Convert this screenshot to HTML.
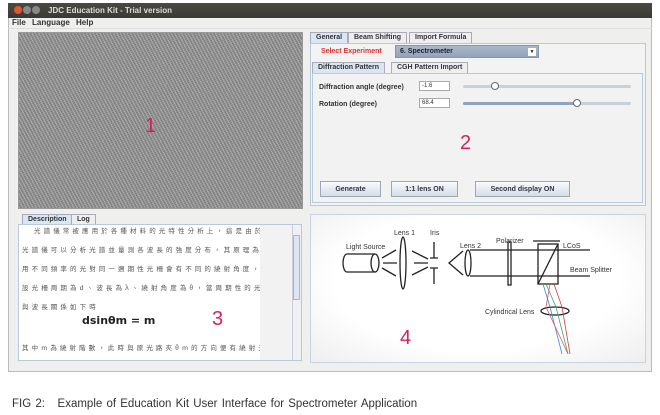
<!DOCTYPE html>
<html><head><meta charset="utf-8"><style>
*{margin:0;padding:0;box-sizing:border-box}
body{width:660px;height:415px;background:#fff;position:relative;overflow:hidden;font-family:"Liberation Sans","DejaVu Sans",sans-serif;font-size:8px;color:#333}
.abs{position:absolute}
.win{left:8px;top:3px;width:644px;height:369px;background:#efefed;border:1px solid #bbb}
.title{left:8px;top:3px;width:644px;height:15px;background:linear-gradient(#4a4944,#3a3935);color:#ddd;font-weight:bold;font-size:8px;line-height:15px;padding-left:40px}
.dot{top:6px;width:8px;height:8px;border-radius:50%}
.menu{left:12px;top:18px;font-weight:bold;font-size:8px;color:#333;word-spacing:4px}
.img{left:18px;top:32px;width:285px;height:177px;background-color:#909090;
background-image:repeating-linear-gradient(62deg,rgba(255,255,255,.28) 0 1px,transparent 1px 3px),repeating-linear-gradient(-20deg,rgba(0,0,0,.12) 0 1px,transparent 1px 2px);border:1px solid #999}
.num{color:#d0245a;font-size:20px;font-family:"Liberation Sans",sans-serif}
.panel{border:1px solid #b9c9dc;background:#f3f3f3}
.tab{top:0;height:11px;border:1px solid #aab;border-bottom:none;font-weight:bold;font-size:7px;line-height:10px;padding:0 5px;background:#eee;color:#333}
.tab.on{background:#dbe6f3}
.btn{height:16px;border:1px solid #9aa8b8;background:linear-gradient(#f8fafc,#d6dde6);font-weight:bold;font-size:7px;text-align:center;line-height:15px;color:#334}
.txt{font-family:"Noto Sans CJK TC",sans-serif;font-size:6.5px;color:#555;letter-spacing:3.1px;line-height:19px;white-space:nowrap;overflow:hidden}
.txt div{height:19px}
</style></head><body>
<div class="abs win"></div>
<div class="abs title">JDC Education Kit - Trial version</div>
<div class="abs dot" style="left:14px;background:#e2572a"></div>
<div class="abs dot" style="left:23px;background:#888"></div>
<div class="abs dot" style="left:32px;background:#888"></div>
<div class="abs menu">File Language Help</div>
<div class="abs" style="left:8px;top:28px;width:644px;height:1px;background:#ddd"></div>

<div class="abs img"></div>
<div class="abs num" style="left:145px;top:115px">1</div>

<div class="abs" style="left:310px;top:32px;width:336px;height:176px">
  <div class="abs tab on" style="left:0">General</div>
  <div class="abs tab" style="left:38px">Beam Shifting</div>
  <div class="abs tab" style="left:99px">Import Formula</div>
  <div class="abs panel" style="left:0;top:11px;width:336px;height:163px"></div>
  <div class="abs" style="left:11px;top:16px;color:#e03030;font-weight:bold;font-size:7px">Select Experiment</div>
  <div class="abs" style="left:85px;top:13px;width:144px;height:13px;background:linear-gradient(#a9b7c9,#94a4b8);border:1px solid #8898aa;font-weight:bold;font-size:7px;line-height:12px;padding-left:4px;color:#223">6. Spectrometer<span class="abs" style="right:2px;top:2px;width:8px;height:8px;background:#fff;font-size:5px;line-height:8px;text-align:center">▼</span></div>
  <div class="abs tab on" style="left:2px;top:30px">Diffraction Pattern</div>
  <div class="abs tab" style="left:81px;top:30px">CGH Pattern Import</div>
  <div class="abs panel" style="left:2px;top:41px;width:331px;height:130px;background:#f2f2f2"></div>
  <div class="abs" style="left:9px;top:52px;font-weight:bold;font-size:7px">Diffraction angle (degree)</div>
  <div class="abs" style="left:9px;top:69px;font-weight:bold;font-size:7px">Rotation (degree)</div>
  <div class="abs" style="left:109px;top:49px;width:31px;height:10px;background:#fff;border:1px solid #aaa;font-size:6px;line-height:8px;padding-left:2px">-1.6</div>
  <div class="abs" style="left:109px;top:66px;width:31px;height:10px;background:#fff;border:1px solid #aaa;font-size:6px;line-height:8px;padding-left:2px">68.4</div>
  <div class="abs" style="left:153px;top:53px;width:168px;height:3px;background:#c8d0da;border-radius:2px"></div>
  <div class="abs" style="left:153px;top:70px;width:168px;height:3px;background:#c8d0da;border-radius:2px"></div>
  <div class="abs" style="left:153px;top:70px;width:115px;height:3px;background:#8ea3bd;border-radius:2px"></div>
  <div class="abs" style="left:181px;top:50px;width:8px;height:8px;border:1px solid #667;border-radius:50%;background:#fff"></div>
  <div class="abs" style="left:263px;top:67px;width:8px;height:8px;border:1px solid #667;border-radius:50%;background:#fff"></div>
  <div class="abs num" style="left:150px;top:100px">2</div>
  <div class="abs btn" style="left:10px;top:149px;width:61px">Generate</div>
  <div class="abs btn" style="left:81px;top:149px;width:67px">1:1 lens ON</div>
  <div class="abs btn" style="left:165px;top:149px;width:95px">Second display ON</div>
</div>

<div class="abs tab on" style="left:22px;top:214px">Description</div>
<div class="abs tab" style="left:71px;top:214px">Log</div>
<div class="abs" style="left:18px;top:224px;width:284px;height:137px;border:1px solid #b9c9dc;background:#fff"></div>
<div class="abs" style="left:260px;top:225px;width:32px;height:135px;background:#f2f2f2"></div>
<div class="abs" style="left:292px;top:225px;width:9px;height:135px;background:#eef0f3;border-left:1px solid #ccd"></div>
<div class="abs" style="left:293px;top:235px;width:7px;height:65px;background:#dce6f2;border:1px solid #a8b8cc"></div>
<div class="abs txt" style="left:22px;top:221px;width:238px">
<div style="padding-left:12px">光譜儀常被應用於各種材料的光特性分析上，這是由於</div>
<div>光譜儀可以分析光譜並量測各波長的強度分布，其原理為利</div>
<div>用不同頻率的光對同一週期性光柵會有不同的繞射角度，假</div>
<div>設光柵周期為d、波長為λ、繞射角度為θ，當周期性的光柵</div>
<div>與波長關係如下時</div>
</div>
<div class="abs" style="left:82px;top:314px;font-weight:bold;font-size:11px;color:#222;font-family:'DejaVu Sans',sans-serif">dsinθm = m</div>
<div class="abs num" style="left:212px;top:308px">3</div>
<div class="abs txt" style="left:22px;top:338px;width:238px">其中m為繞射階數，此時與原光路夾θm的方向便有繞射光產</div>

<div class="abs" style="left:310px;top:214px;width:336px;height:149px;border:1px solid #c9d4e0;background:radial-gradient(ellipse at 50% 45%,#fff 60%,#eee 100%)"></div>
<svg class="abs" style="left:310px;top:214px" width="336" height="149" font-family="Liberation Sans" font-size="7" fill="#333">
<g stroke="#222" fill="none" stroke-width="1.3">
<path d="M37 40 h28 M37 58 h28 M37 40 a4 9 0 0 0 0 18"/>
<ellipse cx="65" cy="49" rx="4" ry="9"/>
<path d="M72 44 l14 -8 M73 49 h14 M72 54 l14 8"/>
<ellipse cx="93" cy="49" rx="3" ry="26"/>
<path d="M102 37 l16 8 M104 49 h14 M102 61 l16 -8"/>
<path d="M124 28 v16 M124 54 v16 M120 44 h8 M120 54 h8"/>
<path d="M153 37 l-14 12 l14 12"/>
<ellipse cx="158" cy="49" rx="3" ry="13"/>
<path d="M160 36 h120 M160 62 h120"/>
<rect x="198" y="28" width="3" height="43"/>
<path d="M223 27 h27"/>
<rect x="228" y="30" width="20" height="40"/>
<path d="M228 70 L248 30"/>
<ellipse cx="245" cy="97" rx="14" ry="4"/>
</g>
<g stroke-width="0.8" fill="none">
<path d="M233 70 L240 93 L252 140" stroke="#3a8ad0"/>
<path d="M236 70 L246 93 L258 140" stroke="#4aa070"/>
<path d="M244 70 L252 93 L260 140" stroke="#d04040"/>
<path d="M240 70 L236 93 L258 140" stroke="#d06060"/>
</g>
<text x="36" y="35">Light Source</text>
<text x="84" y="21">Lens 1</text>
<text x="120" y="21">Iris</text>
<text x="150" y="34">Lens 2</text>
<text x="186" y="29">Polarizer</text>
<text x="253" y="34">LCoS</text>
<text x="260" y="58">Beam Splitter</text>
<text x="175" y="100">Cylindrical Lens</text>
<text x="90" y="130" fill="#d0245a" font-size="20">4</text>
</svg>

<div class="abs" style="left:12px;top:398px;font-size:11.5px;color:#333;word-spacing:1px">FIG 2:&nbsp;&nbsp; Example of Education Kit User Interface for Spectrometer Application</div>
</body></html>
